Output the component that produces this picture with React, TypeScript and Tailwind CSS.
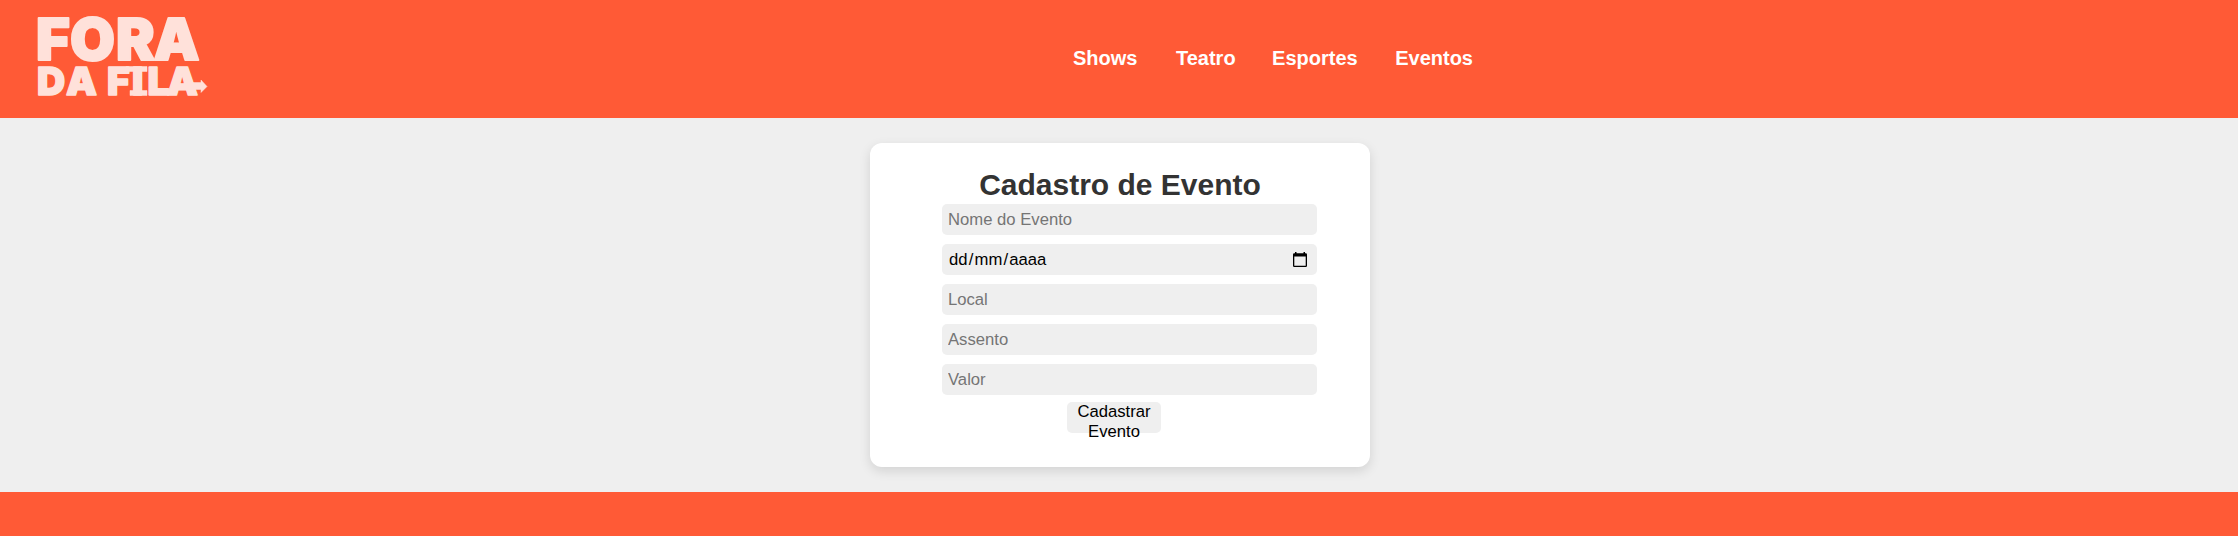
function Logo() {
  return (
    <svg
      width="220"
      height="118"
      viewBox="0 0 220 118"
      fill="#ffe1da"
      stroke="#ffe1da"
      strokeLinejoin="round"
      className="shrink-0 font-[family-name:Inter,sans-serif] font-black"
    >
      <text x="36 70 116 153.500" y="60" fontSize="58" strokeWidth="2">
        FORA
      </text>
      <text x="37 66 96 107 132 147.500 167" y="95" fontSize="39" strokeWidth="1.500">
        DA FILA
      </text>
      <path d="M126 66.500h21v5h-21zM130 90.500h17v5h-17z" strokeWidth="0.500" />
      <path d="M184 82.500H201V80L207 86.500L201 92.500V89.500H184Z" strokeWidth="0.500" />
    </svg>
  );
}

function CalendarIcon() {
  return (
    <svg width="14" height="15" viewBox="0 0 14 15" className="shrink-0">
      <path
        d="M2 0h1.500v1.200h7V0H12v1.200h.8A1.200 1.200 0 0 1 14 2.400v11.400a1.200 1.200 0 0 1-1.200 1.200H1.200A1.200 1.200 0 0 1 0 13.800V2.400A1.200 1.200 0 0 1 1.200 1.200H2ZM1.300 4.500v9.200h11.400V4.500Z"
        fill="#000"
        fillRule="evenodd"
      />
    </svg>
  );
}

const field =
  "block h-[31px] w-[375px] rounded-[5px] bg-[#efefef] px-[6px] text-[16.67px] text-black outline-none placeholder:text-[#757575]";

export default function App() {
  return (
    <div className="flex h-[536px] w-full flex-col overflow-hidden bg-[#efefef] font-['Liberation_Sans',Arial,sans-serif]">
      <header className="flex h-[118px] shrink-0 items-center bg-[#ff5a36]">
        <Logo />
        <nav className="ml-[853px] flex gap-[37.5px] pb-[2px] text-[20px] leading-6 font-bold text-white">
          <a>Shows</a>
          <a className="-mr-px pl-px">Teatro</a>
          <a>Esportes</a>
          <a>Eventos</a>
        </nav>
      </header>
      <main className="flex h-[374px] shrink-0 justify-center pt-[25px]">
        <form className="ml-[2px] h-[324px] w-[500px] rounded-[12px] bg-white pt-[25px] shadow-[0_4px_12px_rgba(0,0,0,0.12)]">
          <h1 className="h-[36px] text-center text-[30px] leading-[34px] font-bold text-[#333]">
            Cadastro de Evento
          </h1>
          <div className="ml-[72px] flex flex-col gap-[9px]">
            <input className={field} placeholder="Nome do Evento" />
            <div className={field}>
              <div className="flex h-full items-center justify-between pr-[4px] pl-[1px]">
                <span className="flex gap-[1.2px] leading-5">
                  <span>dd</span>
                  <span>/</span>
                  <span>mm</span>
                  <span>/</span>
                  <span>aaaa</span>
                </span>
                <CalendarIcon />
              </div>
            </div>
            <input className={field} placeholder="Local" />
            <input className={field} placeholder="Assento" />
            <input className={field} placeholder="Valor" />
          </div>
          <button
            type="button"
            className="mt-[7px] ml-[197px] flex h-[31px] w-[94px] items-start justify-center rounded-[5px] bg-[#efefef] text-center text-[16.67px] leading-5 text-black"
          >
            <span>
              Cadastrar
              <br />
              Evento
            </span>
          </button>
        </form>
      </main>
      <footer className="flex-1 bg-[#ff5a36]" />
    </div>
  );
}
